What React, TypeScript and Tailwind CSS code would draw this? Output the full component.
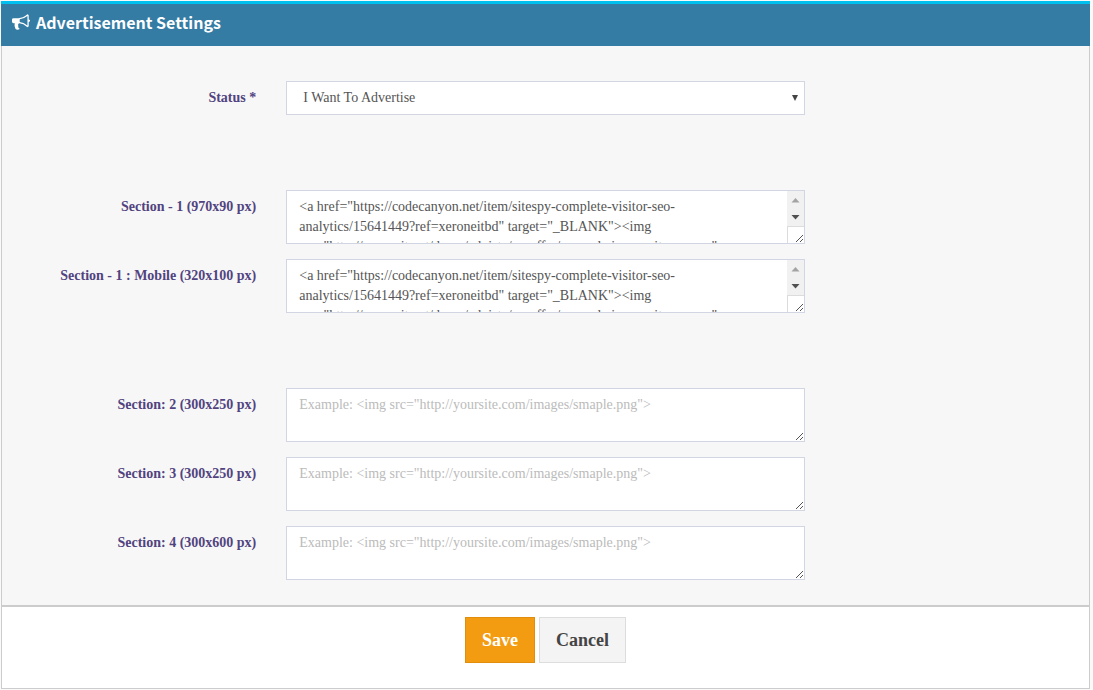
import React from "react";

const adCode =
  '<a href="https://codecanyon.net/item/sitespy-complete-visitor-seo-analytics/15641449?ref=xeroneitbd" target="_BLANK"><img src="http://xeroneit.net/demo/advista/xeroffer/example.image.siteseo.png"';
const example = 'Example: <img src="http://yoursite.com/images/smaple.png">';

function Grip() {
  return (
    <svg viewBox="0 0 8 8" className="pointer-events-none absolute right-px bottom-px size-2" shapeRendering="crispEdges" fill="#555">
      {[0, 1, 2, 3, 4, 5, 6].map((i) => (
        <rect key={i} x={i} y={6 - i} width="1" height="1" />
      ))}
      {[0, 1, 2].map((i) => (
        <rect key={"b" + i} x={4 + i} y={6 - i} width="1" height="1" />
      ))}
    </svg>
  );
}

function ScrollBar() {
  return (
    <div className="absolute top-px right-px bottom-px flex w-[17px] flex-col bg-white">
      <svg viewBox="0 0 17 35" className="h-[35px] w-[17px] bg-[#f1f1f1]">
        <path d="M8.500 7 L12.500 11.500 H4.500z" fill="#a3a3a3" />
        <path d="M4.500 24 H12.500 L8.500 28.500z" fill="#505050" />
      </svg>
      <div className="grow border-t border-l border-[#dcdcdc]" />
    </div>
  );
}

function Row({ id, label, children }: { id: string; label: string; children: React.ReactNode }) {
  return (
    <div className="-mx-[5px] flex">
      <label htmlFor={id} className="w-1/4 px-[15px] pt-[7px] text-right font-bold text-[#51437f]">
        {label}
      </label>
      <div className="w-1/2 px-[15px]">
        <div className="relative">{children}</div>
      </div>
    </div>
  );
}

function AreaRow({ id, label, value }: { id: string; label: string; value?: string }) {
  return (
    <Row id={id} label={label}>
      <textarea
        id={id}
        defaultValue={value}
        placeholder={example}
        className="block h-[54px] w-full resize-none overflow-hidden border border-[#d2d6e4] bg-white py-1.5 pr-7 pl-3 text-[#555] outline-none placeholder:text-[#bbb]"
      />
      {value && <ScrollBar />}
      <Grip />
    </Row>
  );
}

export default function App() {
  return (
    <div className="min-h-screen bg-[#fafafa] pt-px pr-[3px] pl-px font-['Liberation_Serif',serif] text-sm">
      <form className="overflow-hidden" onSubmit={(e) => e.preventDefault()}>
        <header className="border-t-[3px] border-[#00c0ef] bg-[#357ca5] px-2.5 pt-1.5 pb-3 text-white">
          <h1 className="flex items-center gap-[5px] font-['Noto_Sans_CJK_SC',sans-serif] text-base font-bold">
            <svg viewBox="0 0 1792 1792" className="h-[18px] w-5" fill="currentColor" aria-hidden="true">
              <path d="M1664 640q53 0 90.500 37.500t37.500 90.500-37.500 90.500-90.500 37.500v384q0 52-38 90t-90 38q-417-347-812-380-58 19-91 66t-31 100.500 40 92.500q-20 33-23 65.500t6 58 33.500 55 48 50 61.500 50.500q-29 58-111.500 83t-168.500 11.500-132-55.500q-7-23-29.500-87.500t-32-94.500-23-89-15-101 3.500-98.500 22-110.500h-122q-66 0-113-47t-47-113v-192q0-66 47-113t113-47h480q435 0 896-384 52 0 90 38t38 90v384zm-128 604v-954q-394 302-768 343v270q377 42 768 341z" />
            </svg>
            Advertisement Settings
          </h1>
        </header>
        <div className="border border-t-0 border-[#ccc]">
          <div className="flex flex-col bg-[#f7f7f7] pt-[35px] pb-[25px]">
            <Row id="status" label="Status *">
              <select
                id="status"
                className="block h-[34px] w-full appearance-none border border-[#d2d6e4] bg-white px-4 text-[#555] outline-none"
              >
                <option>I Want To Advertise</option>
              </select>
              <svg viewBox="0 0 6 6" className="pointer-events-none absolute top-[14px] right-[7px] size-1.5" fill="#444">
                <path d="M0 0H6L3 6z" />
              </svg>
            </Row>
            <div className="mt-[75px] flex flex-col gap-[15px]">
              <AreaRow id="section1" label="Section - 1 (970x90 px)" value={adCode} />
              <AreaRow id="section1-mobile" label="Section - 1 : Mobile (320x100 px)" value={adCode} />
            </div>
            <div className="mt-[75px] flex flex-col gap-[15px]">
              <AreaRow id="section2" label="Section: 2 (300x250 px)" />
              <AreaRow id="section3" label="Section: 3 (300x250 px)" />
              <AreaRow id="section4" label="Section: 4 (300x600 px)" />
            </div>
          </div>
          <footer className="flex justify-center gap-1 border-t-2 border-[#ccc] bg-white pt-2.5 pb-[25px] text-lg font-bold">
            <button type="submit" className="h-[46px] border border-[#e08e0b] bg-[#f39c12] px-4 text-white">
              Save
            </button>
            <button type="button" className="h-[46px] border border-[#ddd] bg-[#f4f4f4] px-4 text-[#444]">
              Cancel
            </button>
          </footer>
        </div>
      </form>
    </div>
  );
}
